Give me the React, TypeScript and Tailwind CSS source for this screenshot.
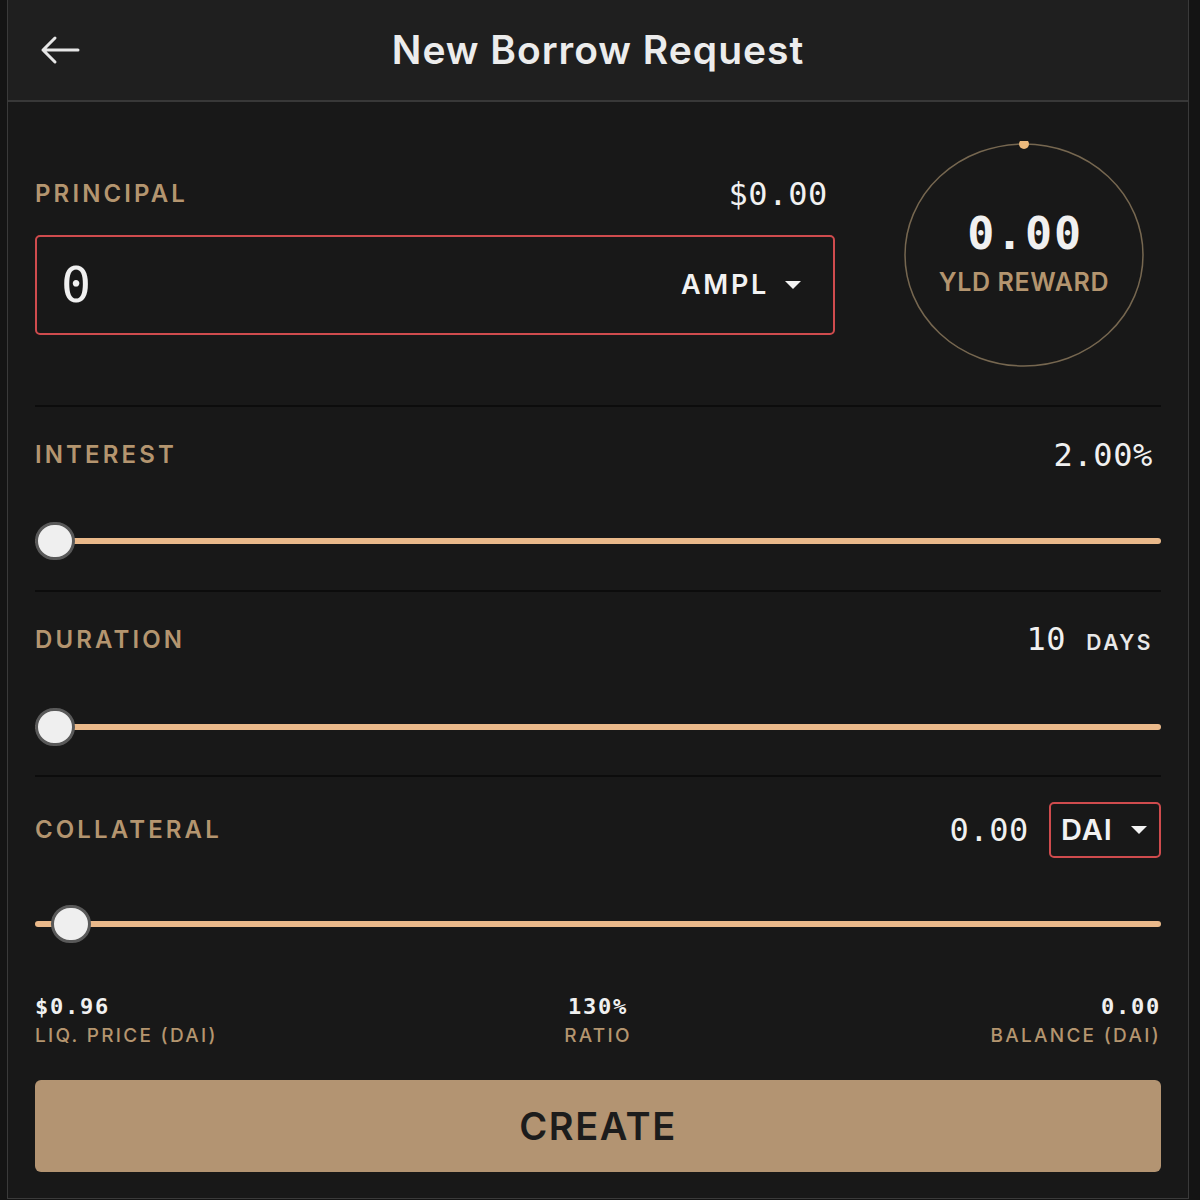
import React from "react";

function Caret() {
  return (
    <svg viewBox="0 0 16 8" className="h-[8px] w-[16px]" fill="#f2f2f2">
      <path d="M0 0 H16 L8 8 Z" />
    </svg>
  );
}

function Slider({ thumb }: { thumb: number }) {
  return (
    <div className="relative h-[38px]">
      <div className="absolute left-0 right-0 top-[16px] h-[6px] rounded-full bg-[#eab98a]" />
      <div
        className="absolute top-0 h-[38px] w-[40px] rounded-full border-[3px] border-[#595959] bg-[#efefef]"
        style={{ left: thumb }}
      />
    </div>
  );
}

const labelClass = "text-[24px] font-semibold uppercase tracking-[0.13em] text-[#b4956f]";
const mono = "font-['DejaVu_Sans_Mono',monospace] text-[#f0f0f0]";
const value = `${mono} text-[32px] leading-[34px] tracking-[0.02em]`;
const statLabel = "mt-[3px] text-[19px] font-medium leading-[24px] tracking-[0.12em] text-[#b4956f]";
const statValue = `${mono} font-bold text-[22px] leading-[28px] tracking-[0.08em]`;

export default function App() {
  return (
    <div className="flex h-[1200px] w-[1200px] bg-[#141414] font-['Inter',sans-serif]">
      <div className="ml-[7px] flex h-[1199px] w-[1182px] flex-col border-x border-b border-[#3a3a3a] bg-[#181818]">
        {/* header */}
        <div className="grid h-[102px] grid-cols-[100px_1fr_100px] items-center border-b-2 border-[#383838] bg-[#1f1f1f]">
          <div className="pl-[32px]">
            <svg viewBox="0 0 40 30" className="h-[30px] w-[40px]" fill="none" stroke="#e6e6e6" strokeWidth="3" strokeLinecap="round" strokeLinejoin="round">
              <path d="M38 15 H3 M15 3 L3 15 L15 27" />
            </svg>
          </div>
          <div className="text-center text-[39px] font-semibold tracking-[0.025em] text-[#ececec]">New Borrow Request</div>
          <div />
        </div>

        <div className="flex flex-col px-[27px]">
          {/* principal */}
          <div className="flex h-[303px]">
            <div className="w-[800px] pt-[77px]">
              <div className="flex h-[30px] items-center justify-between pr-[7px]">
                <span className={labelClass}>Principal</span>
                <span className={value}>$0.00</span>
              </div>
              <div className="mt-[26px] flex h-[100px] items-center justify-between rounded-[5px] border-2 border-[#cf4b4d] pl-[24px] pr-[32px]">
                <span className={`${mono} text-[50px] leading-[52px]`}>0</span>
                <div className="flex items-center gap-[16px]">
                  <span className="text-[27px] font-semibold tracking-[0.1em] text-[#f2f2f2]">AMPL</span>
                  <Caret />
                </div>
              </div>
            </div>
            <div className="relative ml-[68px] mt-[39px] h-[226px] w-[242px]">
              <svg viewBox="0 0 242 226" className="absolute inset-0 h-[226px] w-[242px]">
                <ellipse cx="121" cy="114" rx="119" ry="111" fill="none" stroke="#766750" strokeWidth="1.5" />
                <circle cx="121" cy="3" r="5" fill="#ebb97c" />
              </svg>
              <div className="absolute inset-0 flex flex-col items-center pt-[70px]">
                <span className={`${mono} pl-[2px] text-[45px] font-bold leading-[46px] tracking-[0.04em]`}>0.00</span>
                <span className="mt-[10px] text-[25px] font-semibold leading-[30px] tracking-[0.025em] text-[#b4956f]">YLD REWARD</span>
              </div>
            </div>
          </div>

          <div className="h-[2px] bg-[#0c0c0c]" />

          {/* interest */}
          <div className="pb-[30px] pt-[33px]">
            <div className="flex h-[30px] items-center justify-between pr-[8px]">
              <span className={labelClass}>Interest</span>
              <span className={value}>2.00%</span>
            </div>
            <div className="mt-[52px]">
              <Slider thumb={0} />
            </div>
          </div>

          <div className="h-[2px] bg-[#0c0c0c]" />

          {/* duration */}
          <div className="pb-[29px] pt-[33px]">
            <div className="flex h-[30px] items-center justify-between pr-[8px]">
              <span className={labelClass}>Duration</span>
              <div className="flex items-baseline gap-[20px]">
                <span className={value}>10</span>
                <span className="text-[21px] font-semibold tracking-[0.12em] text-[#e8e8e8]">DAYS</span>
              </div>
            </div>
            <div className="mt-[53px]">
              <Slider thumb={0} />
            </div>
          </div>

          <div className="h-[2px] bg-[#0c0c0c]" />

          {/* collateral */}
          <div className="pt-[25px]">
            <div className="flex h-[56px] items-center justify-between">
              <span className={labelClass}>Collateral</span>
              <div className="flex items-center gap-[20px]">
                <span className={value}>0.00</span>
                <div className="flex h-[56px] w-[112px] items-center justify-between rounded-[5px] border-2 border-[#cf4b4d] pl-[10px] pr-[12px]">
                  <span className="text-[29px] font-semibold tracking-[0.03em] text-[#f2f2f2]">DAI</span>
                  <Caret />
                </div>
              </div>
            </div>
            <div className="mt-[47px]">
              <Slider thumb={16} />
            </div>

            {/* stats */}
            <div className="mt-[50px] grid grid-cols-3">
              <div className="flex flex-col items-start">
                <span className={statValue}>$0.96</span>
                <span className={statLabel}>LIQ. PRICE (DAI)</span>
              </div>
              <div className="flex flex-col items-center">
                <span className={statValue}>130%</span>
                <span className={statLabel}>RATIO</span>
              </div>
              <div className="flex flex-col items-end">
                <span className={statValue}>0.00</span>
                <span className={statLabel}>BALANCE (DAI)</span>
              </div>
            </div>

            <button className="mt-[32px] flex h-[92px] w-full items-center justify-center rounded-[6px] bg-[#b39472] text-[38px] font-semibold tracking-[0.04em] text-[#1c1c1c]">
              CREATE
            </button>
          </div>
        </div>
      </div>
    </div>
  );
}
